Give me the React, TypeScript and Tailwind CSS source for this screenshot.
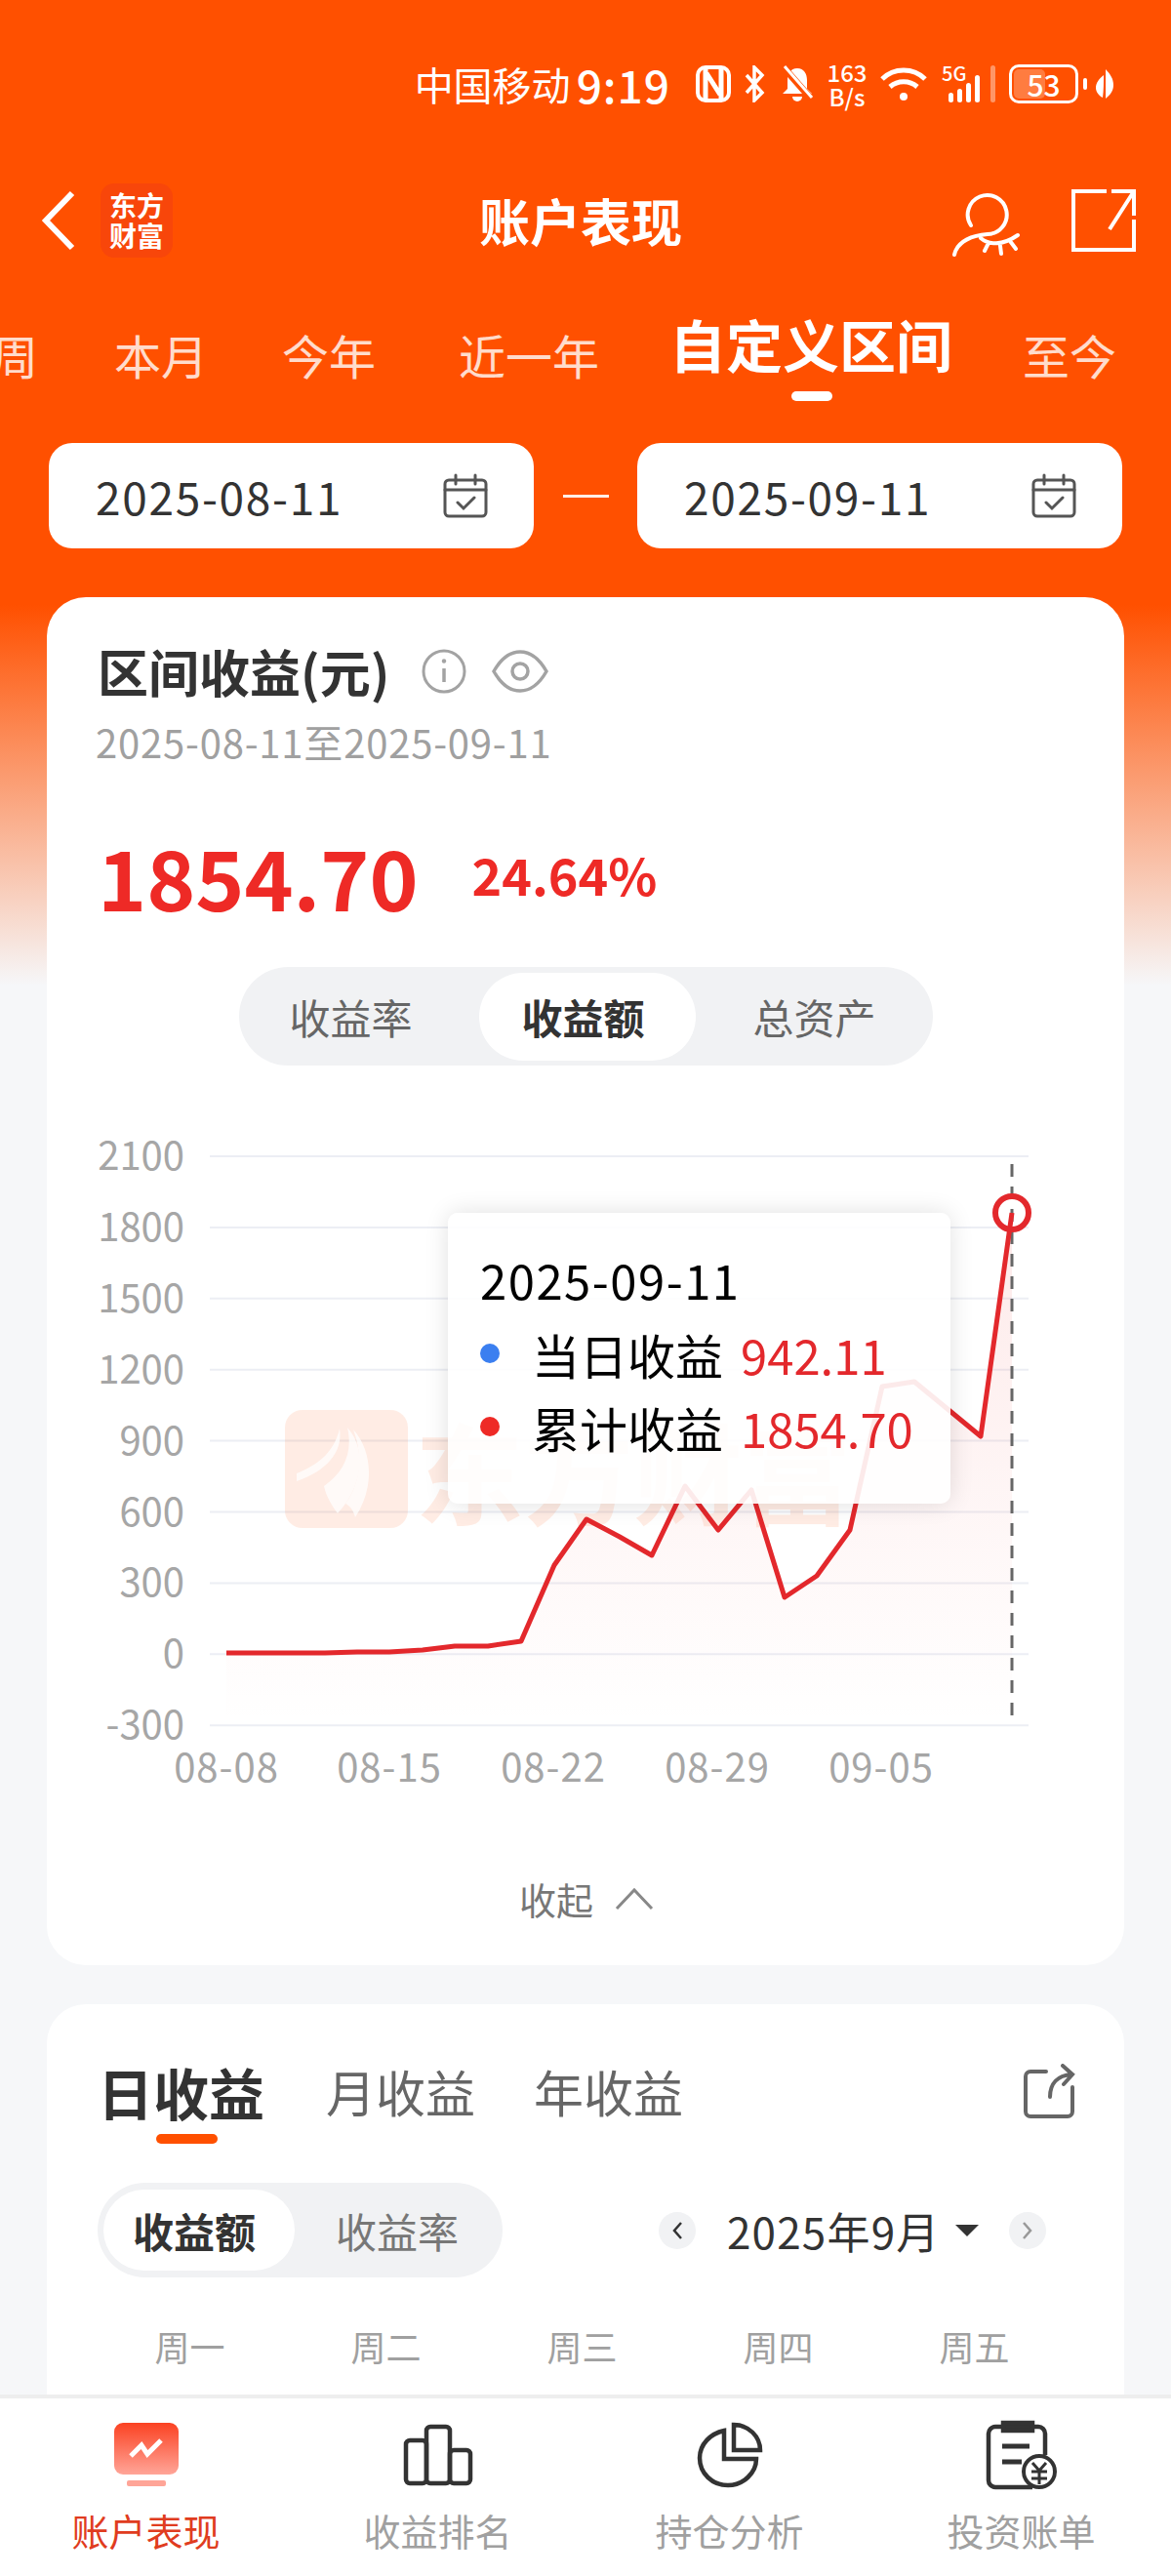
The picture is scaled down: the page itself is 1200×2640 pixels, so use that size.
import React from "react";

const FONT = '"Noto Sans CJK SC", "Noto Sans", sans-serif';

const points: [number, number][] = [
  [232, 1696], [265, 1696], [299, 1696], [333, 1696], [366, 1695], [399, 1695], [433, 1693],
  [466, 1689], [500, 1689], [534, 1684], [568, 1606], [601, 1559], [635, 1577], [668, 1596],
  [702, 1525], [736, 1570], [770, 1529], [804, 1639], [837, 1617], [871, 1570], [904, 1423],
  [937, 1418], [971, 1446], [1005, 1474], [1037, 1245],
];

const line = points.map((p) => p.join(",")).join(" ");
const yLabels = ["2100", "1800", "1500", "1200", "900", "600", "300", "0", "-300"];
const xLabels: [string, number][] = [["08-08", 232], ["08-15", 399], ["08-22", 567], ["08-29", 735], ["09-05", 903]];

const StatusBar = () => (
  <div className="h-[176px] flex items-center justify-end pr-[58px] pb-[4px] text-white shrink-0">
    <span className="text-[40px] leading-none mr-[6px]">中国移动</span>
    <span className="text-[46px] leading-none font-medium tracking-[1px] mr-[26px]">9:19</span>
    <svg width="36" height="38" viewBox="0 0 36 38" fill="none" stroke="white" className="mr-[12px]">
      <rect x="2" y="2" width="32" height="34" rx="8" strokeWidth="4" />
      <path d="M10 3v32M26 3v32M11 8l14 22" strokeWidth="5" />
    </svg>
    <svg width="24" height="38" viewBox="0 0 24 38" fill="none" stroke="white" strokeWidth="3.5" className="mr-[14px]">
      <path d="M4 10l16 18-8 8V2l8 8L4 28" />
    </svg>
    <svg width="36" height="38" viewBox="0 0 36 38" fill="white" className="mr-[12px]">
      <path d="M18 3c7 0 10 6 10 12v9l5 5H3l5-5v-9C8 9 11 3 18 3z" />
      <path d="M13 32h10a5 5 0 01-10 0z" />
      <path d="M4 2l28 32" stroke="#ff5000" strokeWidth="7" />
      <path d="M5 1l28 32" stroke="white" strokeWidth="3" />
    </svg>
    <div className="flex flex-col items-center leading-none text-[24px] font-medium mr-[12px] w-[42px]">
      <span>163</span>
      <span className="mt-[1px]">B/s</span>
    </div>
    <svg width="50" height="38" viewBox="0 0 50 38" fill="none" stroke="white" strokeWidth="5" className="mr-[14px]">
      <path d="M3 14c12-12 32-12 44 0" />
      <path d="M11 22c8-7 20-7 28 0" />
      <circle cx="25" cy="32" r="4" fill="white" stroke="none" />
    </svg>
    <div className="relative w-[44px] h-[38px] mr-[6px]">
      <span className="absolute left-0 top-[-2px] text-[20px] leading-none font-medium">5G</span>
      <div className="absolute left-[7px] bottom-0 flex items-end gap-[4px]">
        <div className="w-[5px] h-[10px] bg-white rounded-full" />
        <div className="w-[5px] h-[14px] bg-white rounded-full" />
        <div className="w-[5px] h-[20px] bg-white rounded-full" />
        <div className="w-[5px] h-[28px] bg-white rounded-full" />
      </div>
    </div>
    <div className="w-[5px] h-[38px] bg-white/40 rounded-full mr-[14px]" />
    <div className="w-[71px] h-[40px] border-[3px] border-white rounded-[10px] p-[2px] relative mr-[5px]">
      <div className="h-full w-[53%] bg-white/25 rounded-[5px]" />
      <span className="absolute inset-0 flex items-center justify-center text-[30px] leading-none font-medium">53</span>
    </div>
    <div className="w-[4px] h-[12px] bg-white rounded-full mr-[8px]" />
    <svg width="20" height="32" viewBox="0 0 20 32" fill="white">
      <path d="M11 1c5 5 8 10 8 16s-3 10-8 14c0-8 0-20 0-30zM9 7C4 11 1 15 1 20c0 4 3 8 7 10 1-7 1-16 1-23z" />
    </svg>
  </div>
);

const NavBar = () => (
  <div className="h-[100px] flex items-center relative shrink-0 text-white">
    <svg width="36" height="62" viewBox="0 0 36 62" fill="none" stroke="white" strokeWidth="6" className="ml-[42px]">
      <path d="M32 3L5 31l27 28" />
    </svg>
    <div className="ml-[25px] w-[74px] h-[76px] rounded-[14px] bg-[#f8460a] flex flex-col items-center justify-center text-[28px] leading-[31px] font-bold">
      <span>东方</span>
      <span>财富</span>
    </div>
    <span className="absolute left-0 right-0 text-center pr-[10px] text-[52px] font-bold leading-none">账户表现</span>
    <svg width="72" height="74" viewBox="0 0 72 74" fill="none" stroke="white" strokeWidth="4" strokeLinecap="round" className="ml-auto mr-[50px]">
      <path d="M20 42a20 20 0 1 1 17 9C22 52 6 58 3 72" />
      <path d="M30 55c8 7 22 8 38-3M38 60l-4 8M50 63l1 8M60 58l6 8" />
    </svg>
    <svg width="68" height="66" viewBox="0 0 68 66" fill="none" stroke="white" strokeWidth="4" className="mr-[35px]">
      <path d="M37 3H3v60h62V32M65 28V3H42M65 3L40 42" />
    </svg>
  </div>
);

const Tabs = () => (
  <div className="h-[178px] relative shrink-0 text-white/80 text-[48px] leading-none overflow-hidden">
    <div className="flex items-center h-full gap-[77px] ml-[-9px] pb-[4px]">
      <span className="shrink-0">周</span>
      <span className="shrink-0 ml-[1px]">本月</span>
      <span className="shrink-0 ml-[-1px]">今年</span>
      <span className="shrink-0 ml-[8px]">近一年</span>
      <div className="shrink-0 relative ml-[-5px] text-white font-bold text-[58px] mt-[-22px]">
        自定义区间
        <div className="absolute left-[125px] bottom-[-30px] w-[42px] h-[10px] rounded-full bg-white" />
      </div>
      <span className="shrink-0 ml-[-5px]">至今</span>
    </div>
  </div>
);

const CalendarIcon = () => (
  <svg width="46" height="46" viewBox="0 0 46 46" fill="none" stroke="#555" strokeWidth="3" strokeLinecap="round">
    <rect x="2" y="7" width="42" height="37" rx="4" />
    <path d="M2 17h42M13 2v9M33 2v9M15 30l6 6 11-11" />
  </svg>
);

const DateBox = ({ value }: { value: string }) => (
  <div className="w-[497px] h-[108px] bg-white rounded-[24px] flex items-center justify-between pl-[48px] pr-[47px] text-[#333] text-[46px] tracking-[1.7px] leading-none">
    <span>{value}</span>
    <CalendarIcon />
  </div>
);

const Chart = () => (
  <div className="relative h-[710px] mt-[56px]">
    <svg width="1104" height="710" viewBox="48 1150 1104 710" className="block" fontFamily={FONT}>
      <defs>
        <linearGradient id="area" x1="0" y1="0" x2="0" y2="1">
          <stop offset="0" stopColor="#ee2a26" stopOpacity="0.1" />
          <stop offset="1" stopColor="#ee2a26" stopOpacity="0" />
        </linearGradient>
      </defs>
      {yLabels.map((label, i) => (
        <g key={label}>
          <line x1="215" x2="1054" y1={1187 + i * 72.9} y2={1187 + i * 72.9} stroke="#eceef4" strokeWidth="2" />
          <text x="189" y={1187 + i * 72.9 + 14} textAnchor="end" fontSize="40" fill="#a6a6a6">{label}</text>
        </g>
      ))}
      {xLabels.map(([label, x]) => (
        <text key={label} x={x} y="1828" textAnchor="middle" fontSize="40" letterSpacing="1" fill="#a6a6a6">{label}</text>
      ))}
      <g fill="#ff5000" opacity="0.1">
        <rect x="292" y="1447" width="126" height="121" rx="18" />
        <text x="425" y="1557" fontSize="112" fontWeight="700">东方财富</text>
      </g>
      <g fill="white" opacity="0.75">
        <path d="M304 1512c20-8 38-20 44-46 4 24-14 44-44 54z" />
        <path d="M332 1525c20-14 30-34 24-60 20 22 16 60-10 88-6-8-12-18-14-28z" />
        <path d="M362 1467c20 22 22 60 2 90-2-8-6-12-10-14 16-22 18-50 8-76z" />
      </g>
      <polygon points={`232,1770 ${line} 1037,1770`} fill="url(#area)" />
      <line x1="1037" x2="1037" y1="1195" y2="1770" stroke="#666" strokeWidth="3" strokeDasharray="13 10" />
      <polyline points={line} fill="none" stroke="#e3282c" strokeWidth="5" strokeLinejoin="round" />
      <circle cx="1037" cy="1245" r="17" fill="none" stroke="#e3282c" strokeWidth="6" />
    </svg>
    <div className="absolute left-[411px] top-[95px] w-[515px] h-[298px] rounded-[10px] bg-white/90 shadow-[0_0_24px_rgba(0,0,0,0.12)] pl-[33px] pt-[40px] text-[49px] leading-none text-black">
      <div className="leading-[56px] tracking-[1.5px]">2025-09-11</div>
      <div className="flex items-center mt-[20px] h-[56px]">
        <div className="w-[20px] h-[20px] rounded-full bg-[#3b7ff0] mr-[33px]" />
        <span>当日收益</span>
        <span className="text-[#e3282c] ml-[18px]">942.11</span>
      </div>
      <div className="flex items-center mt-[19px] h-[56px]">
        <div className="w-[20px] h-[20px] rounded-full bg-[#ee2a26] mr-[33px]" />
        <span>累计收益</span>
        <span className="text-[#e3282c] ml-[18px]">1854.70</span>
      </div>
    </div>
  </div>
);

const SummaryCard = () => (
  <div className="mx-[48px] bg-white rounded-[40px] h-[1402px] shrink-0 flex flex-col">
    <div className="flex items-center pl-[52px] pt-[40px] h-[112px]">
      <span className="text-[52px] font-bold text-[#333] leading-none">区间收益(元)</span>
      <svg width="46" height="46" viewBox="0 0 46 46" fill="none" stroke="#a3a3a3" strokeWidth="3" className="ml-[33px]">
        <circle cx="23" cy="23" r="21" />
        <path d="M23 20v14" strokeWidth="3.5" />
        <circle cx="23" cy="12.5" r="2.2" fill="#a3a3a3" stroke="none" />
      </svg>
      <svg width="58" height="46" viewBox="0 0 58 46" fill="none" stroke="#a3a3a3" strokeWidth="3.5" className="ml-[26px]">
        <path d="M2 23C10 9 20 3 29 3s19 6 27 20c-8 14-18 20-27 20S10 37 2 23z" />
        <circle cx="29" cy="23" r="8" />
      </svg>
    </div>
    <div className="pl-[50px] mt-[16px] text-[40px] tracking-[0.8px] leading-none text-[#a0a0a0]">2025-08-11至2025-09-11</div>
    <div className="flex items-center pl-[52px] mt-[71px] h-[90px] text-[#ee2a26] font-bold leading-none">
      <span className="text-[85px]">1854.70</span>
      <span className="text-[52px] ml-[55px]">24.64%</span>
    </div>
    <div className="self-center mt-[50px] w-[711px] h-[101px] bg-[#f1f2f4] rounded-full flex items-center pl-[52px] text-[42px] text-[#666] leading-none">
      <span className="shrink-0">收益率</span>
      <span className="ml-[68px] shrink-0 bg-white rounded-full w-[222px] h-[90px] flex items-center justify-center pr-[8px] font-bold text-[#333]">收益额</span>
      <span className="ml-[59px] shrink-0">总资产</span>
    </div>
    <Chart />
    <div className="flex items-center justify-center mt-[69px] pl-[2px] text-[38px] leading-none text-[#777]">
      <span>收起</span>
      <svg width="40" height="24" viewBox="0 0 40 24" fill="none" stroke="#888" strokeWidth="3" className="ml-[22px]">
        <path d="M2 22L20 3l18 19" />
      </svg>
    </div>
  </div>
);

const DailyCard = () => (
  <div className="mx-[48px] mt-[40px] bg-white rounded-t-[40px] h-[600px] shrink-0 px-[52px]">
    <div className="flex items-center pt-[50px] h-[128px] relative text-[51px] leading-none text-[#666]">
      <div className="relative font-bold text-[57px] text-[#333]">
        日收益
        <div className="absolute left-[60px] bottom-[-25px] w-[63px] h-[10px] rounded-full bg-[#ff5000]" />
      </div>
      <span className="ml-[63px]">月收益</span>
      <span className="ml-[60px]">年收益</span>
      <svg width="54" height="56" viewBox="0 0 54 56" fill="none" stroke="#666" strokeWidth="4" strokeLinecap="round" className="ml-auto mr-[-2px]">
        <path d="M24 8H8a5 5 0 00-5 5v36a5 5 0 005 5h38a5 5 0 005-5V24M28 34c0-14 8-22 22-23M41 2l10 9-9 10" />
      </svg>
    </div>
    <div className="flex items-center mt-[55px]">
      <div className="w-[415px] h-[97px] bg-[#f1f2f4] rounded-full flex items-center pl-[6px] text-[42px] leading-none">
        <span className="w-[196px] h-[83px] bg-white rounded-full flex items-center justify-center pr-[10px] font-bold text-[#333]">收益额</span>
        <span className="ml-[42px] text-[#777]">收益率</span>
      </div>
      <div className="ml-[160px] w-[38px] h-[38px] rounded-full bg-[#f1f2f4] flex items-center justify-center">
        <svg width="12" height="20" viewBox="0 0 12 20" fill="none" stroke="#333" strokeWidth="2.5"><path d="M10 2L3 10l7 8" /></svg>
      </div>
      <span className="ml-[32px] text-[44px] tracking-[1.2px] leading-none text-[#333]">2025年9月</span>
      <div className="ml-[15px] w-0 h-0 border-x-[12px] border-x-transparent border-t-[12px] border-t-[#333]" />
      <div className="ml-[31px] w-[38px] h-[38px] rounded-full bg-[#f1f2f4] flex items-center justify-center">
        <svg width="12" height="20" viewBox="0 0 12 20" fill="none" stroke="#999" strokeWidth="2.5"><path d="M2 2l7 8-7 8" /></svg>
      </div>
    </div>
    <div className="flex mt-[52px] ml-[-52px] pl-[46px] text-[36px] leading-none text-[#a0a0a0]">
      {["周一", "周二", "周三", "周四", "周五"].map((d) => (
        <span key={d} className="w-[201px] text-center">{d}</span>
      ))}
    </div>
  </div>
);

const BottomTab = ({ label, active, children }: { label: string; active?: boolean; children: React.ReactNode }) => (
  <div className="w-[300px] flex flex-col items-center">
    <div className="h-[76px] flex items-center justify-center">{children}</div>
    <span className={`mt-[20px] text-[38px] leading-none ${active ? "text-[#e03c20]" : "text-[#a0a0a0]"}`}>{label}</span>
  </div>
);

const BottomNav = () => (
  <div className="h-[186px] shrink-0 bg-white border-t-[4px] border-[#eeeeee] flex justify-center pt-[20px] pr-[4px]">
    <BottomTab label="账户表现" active>
      <svg width="68" height="66" viewBox="0 0 68 66">
        <defs>
          <linearGradient id="tab" x1="0" y1="0" x2="0" y2="1">
            <stop offset="0" stopColor="#fb4222" />
            <stop offset="1" stopColor="#ffa598" />
          </linearGradient>
        </defs>
        <rect x="1" y="0" width="66" height="53" rx="9" fill="url(#tab)" />
        <rect x="14" y="59" width="40" height="6" rx="2" fill="#ffa598" />
        <path d="M18 34l11-11 6 9 14-14" fill="none" stroke="white" strokeWidth="5" />
      </svg>
    </BottomTab>
    <BottomTab label="收益排名">
      <svg width="72" height="64" viewBox="0 0 72 64" fill="none" stroke="#333" strokeWidth="4.5">
        <rect x="3" y="17" width="21" height="44" rx="4" />
        <rect x="24" y="3" width="24" height="58" rx="4" />
        <rect x="48" y="27" width="21" height="34" rx="4" />
      </svg>
    </BottomTab>
    <BottomTab label="持仓分析">
      <svg width="68" height="68" viewBox="0 0 68 68" fill="none" stroke="#333" strokeWidth="4.5">
        <path d="M28 9C14 12 3 23 3 37c0 16 13 28 29 28s29-13 29-27H28V9z" />
        <path d="M38 3c15 0 27 12 27 26H38V3z" />
      </svg>
    </BottomTab>
    <BottomTab label="投资账单">
      <svg width="74" height="72" viewBox="0 0 74 72" fill="none" stroke="#333" strokeWidth="4.5">
        <path d="M18 7H10a7 7 0 00-7 7v48a7 7 0 007 7h38M48 7h6a7 7 0 017 7v22" />
        <path d="M18 3h30v8H18z" fill="#333" />
        <path d="M17 27h28M17 43h20" strokeWidth="5" />
        <circle cx="55" cy="53" r="16" strokeWidth="4" />
        <path d="M48 44l7 8 7-8M47 53h16M47 60h16M55 52v14" strokeWidth="3" />
      </svg>
    </BottomTab>
  </div>
);

export default function App() {
  return (
    <div
      className="w-[1200px] h-[2640px] flex flex-col overflow-hidden bg-[linear-gradient(180deg,#ff5000_0,#ff5000_620px,#f6f7f9_1010px)]"
      style={{ fontFamily: FONT }}
    >
      <div className="flex-1 min-h-0 overflow-hidden">
        <StatusBar />
        <NavBar />
        <Tabs />
        <div className="flex items-center justify-between mx-[50px] shrink-0">
          <DateBox value="2025-08-11" />
          <div className="w-[47px] h-[3px] bg-white/90" />
          <DateBox value="2025-09-11" />
        </div>
        <div className="h-[50px]" />
        <SummaryCard />
        <DailyCard />
      </div>
      <BottomNav />
    </div>
  );
}
